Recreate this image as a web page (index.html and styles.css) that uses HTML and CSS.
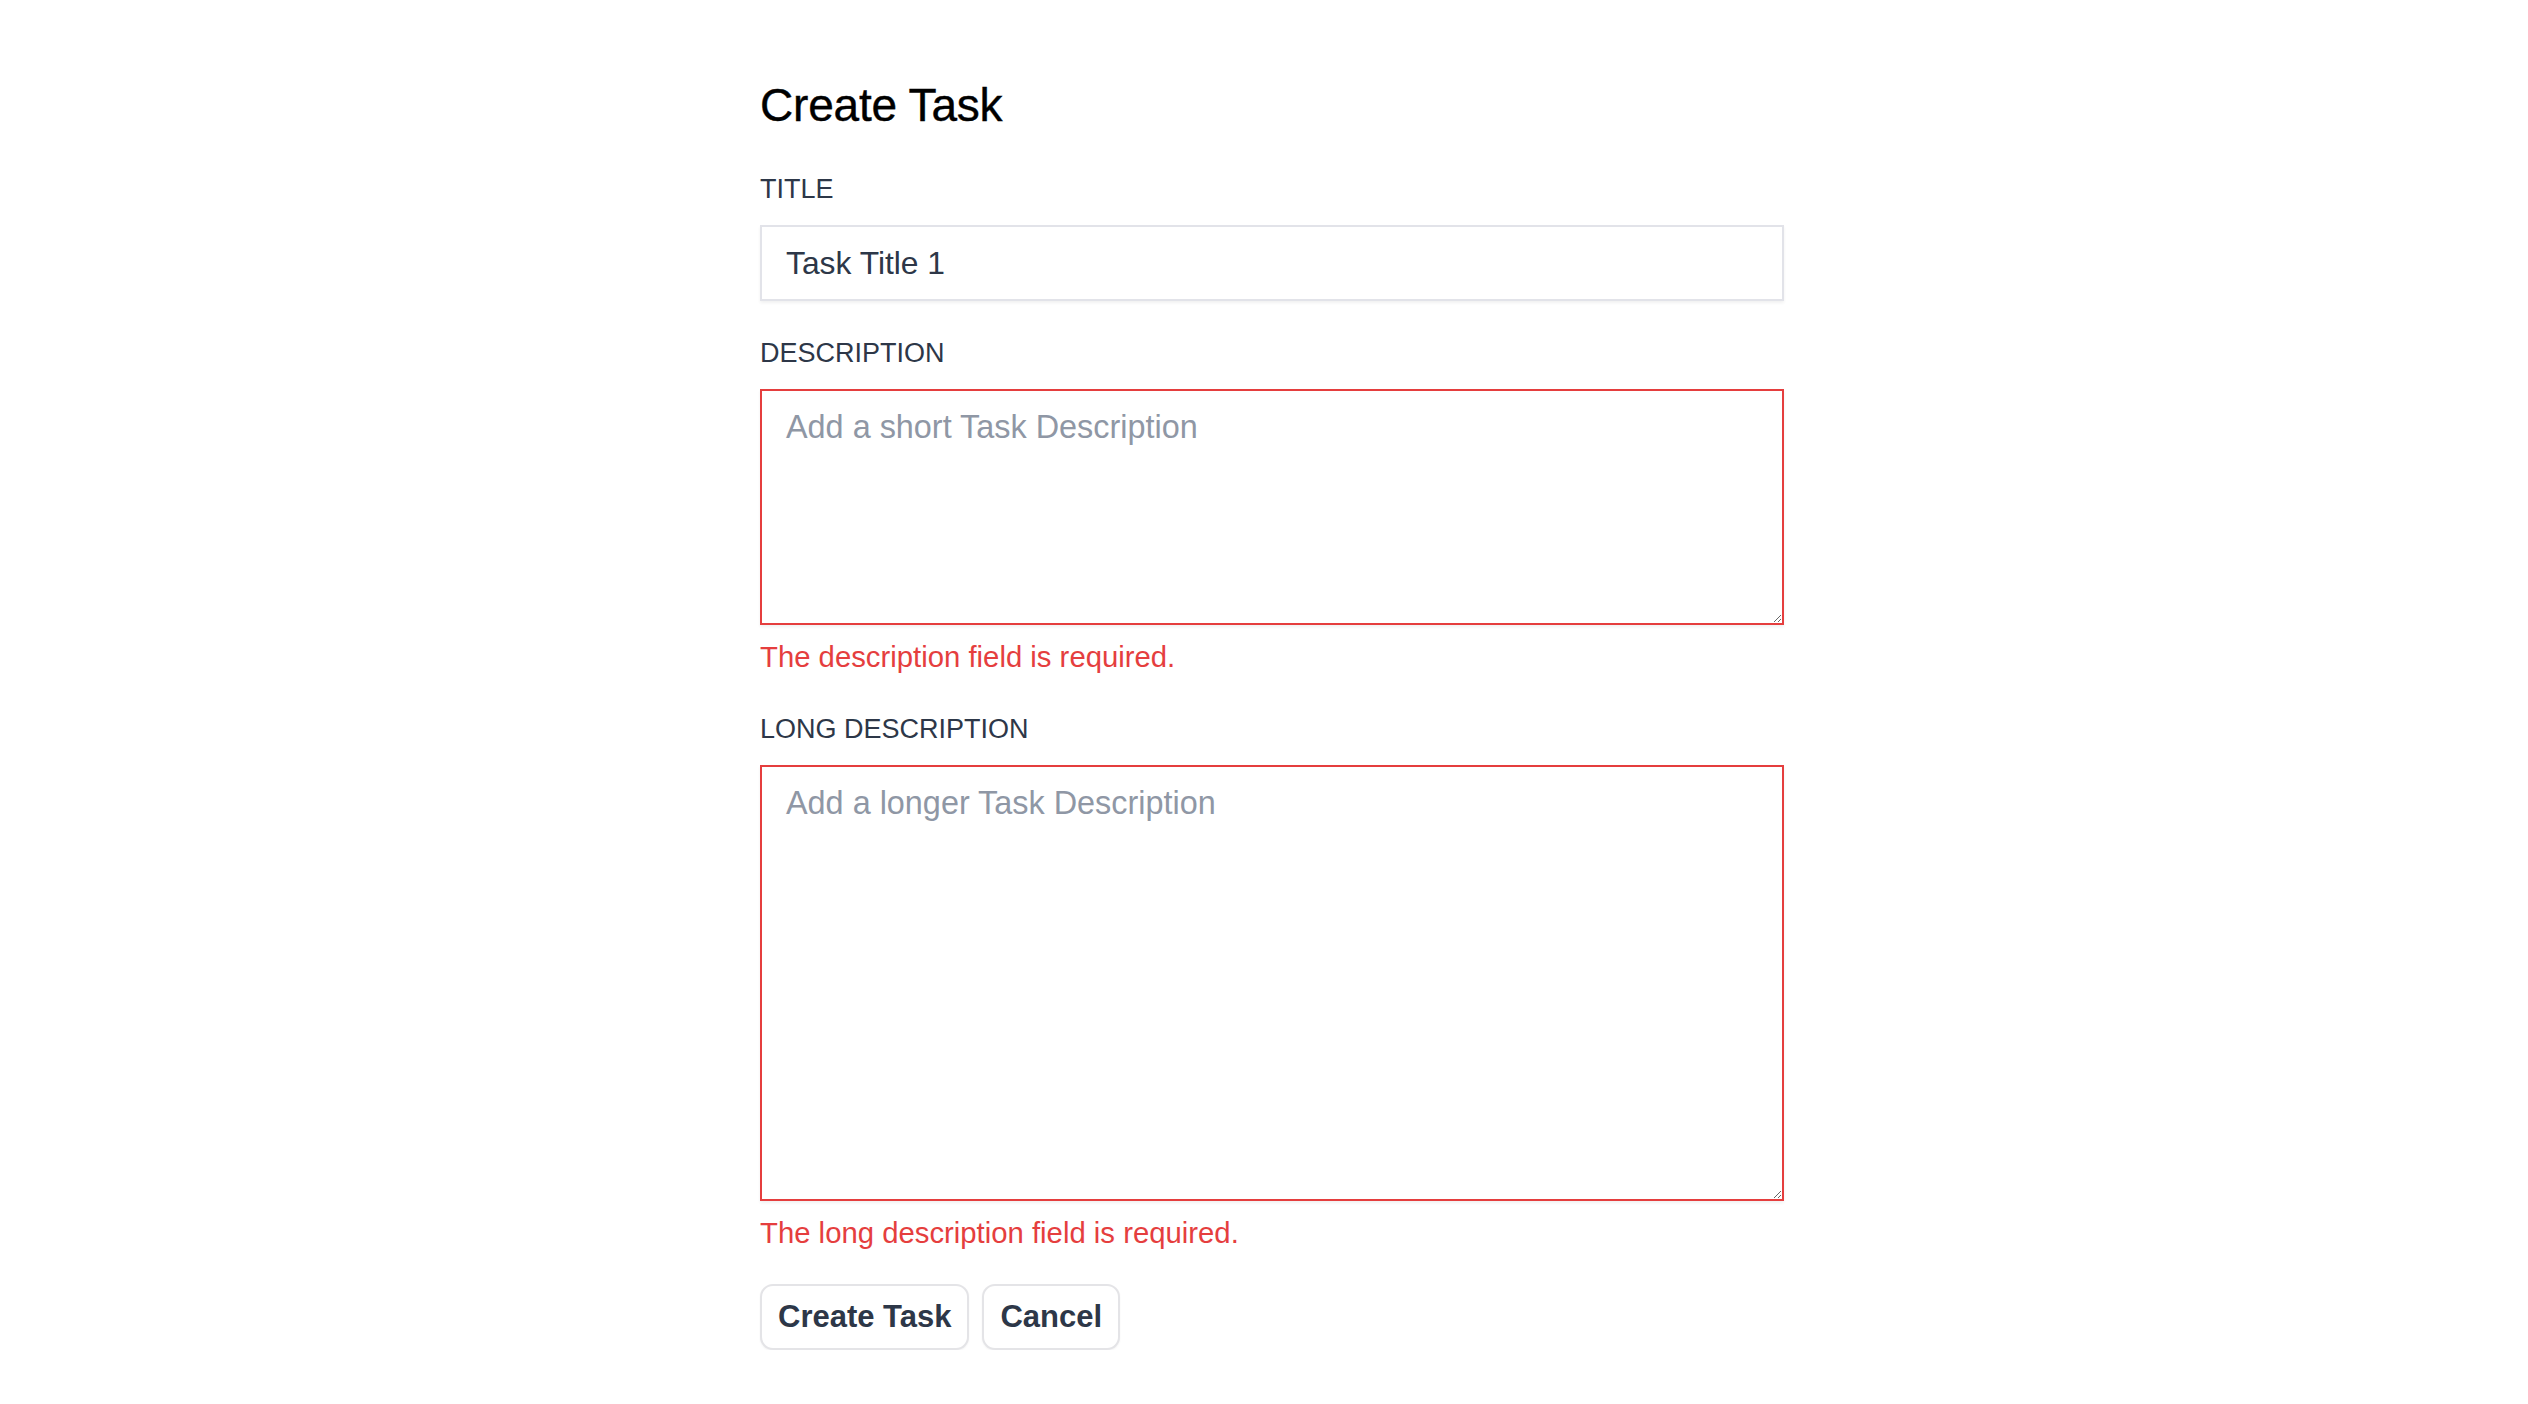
FILE: index.html
```html
<!DOCTYPE html>
<html lang="en">
<head>
<meta charset="utf-8">
<title>Create Task</title>
<link rel="stylesheet" href="styles.css">
</head>
<body>
<div class="page">
  <form class="task-form">
    <h1 class="heading">Create Task</h1>
    <div class="field">
      <label class="label" for="title">TITLE</label>
      <input class="input" id="title" type="text" value="Task Title 1">
    </div>
    <div class="field">
      <label class="label" for="desc">DESCRIPTION</label>
      <textarea class="textarea textarea-short has-error" id="desc" placeholder="Add a short Task Description"></textarea>
      <p class="error">The description field is required.</p>
    </div>
    <div class="field">
      <label class="label" for="longdesc">LONG DESCRIPTION</label>
      <textarea class="textarea textarea-long has-error" id="longdesc" placeholder="Add a longer Task Description"></textarea>
      <p class="error">The long description field is required.</p>
    </div>
    <div class="actions">
      <button type="button" class="btn">Create Task</button>
      <button type="button" class="btn">Cancel</button>
    </div>
  </form>
</div>
</body>
</html>
```

FILE: styles.css
```css
html, body {
  margin: 0;
  padding: 0;
  background: #ffffff;
}

body {
  font-family: "Liberation Sans", Arial, sans-serif;
  color: #2d3748;
}

.page {
  display: flex;
  justify-content: center;
  padding: 73px 0 0 16px;
}

.task-form {
  width: 1024px;
  display: flex;
  flex-direction: column;
}

.heading {
  margin: 0 0 32px 0;
  font-size: 46px;
  line-height: 64px;
  font-weight: 400;
  color: #000000;
  letter-spacing: -0.2px;
  -webkit-text-stroke: 0.4px #000000;
}

.field {
  display: flex;
  flex-direction: column;
  margin-bottom: 32px;
}

.label {
  display: block;
  font-size: 27px;
  line-height: 40px;
  margin-bottom: 16px;
  color: #2d3748;
}

.input,
.textarea {
  display: block;
  box-sizing: border-box;
  width: 100%;
  margin: 0;
  border: 2px solid #e2e3e9;
  border-radius: 0;
  padding: 12px 24px;
  font-family: "Liberation Sans", Arial, sans-serif;
  font-size: 31.8px;
  line-height: 48px;
  color: #2d3748;
  background: #ffffff;
  box-shadow: 0 2px 3px rgba(0, 0, 0, 0.06);
  outline: none;
}

.input {
  height: 76px;
}

.textarea {
  resize: vertical;
  font-size: 32.4px;
}

.textarea::placeholder,
.input::placeholder {
  color: #8f97a5;
  opacity: 1;
}

.textarea-short {
  height: 236px;
}

.textarea-long {
  height: 436px;
}

.has-error {
  border-color: #e53e3e;
}

.error {
  margin: 12px 0 0 0;
  font-size: 29.3px;
  line-height: 40px;
  color: #e53e3e;
}

.actions {
  display: flex;
  gap: 13px;
  margin-top: -1px;
}

.btn {
  box-sizing: border-box;
  height: 66px;
  padding: 0 16px;
  border: 2px solid #e4e4e7;
  border-radius: 13px;
  background: #ffffff;
  font-family: "Liberation Sans", Arial, sans-serif;
  font-size: 31px;
  font-weight: 700;
  color: #2d3748;
  box-shadow: 0 1px 2px rgba(0, 0, 0, 0.05);
  cursor: pointer;
}
```
